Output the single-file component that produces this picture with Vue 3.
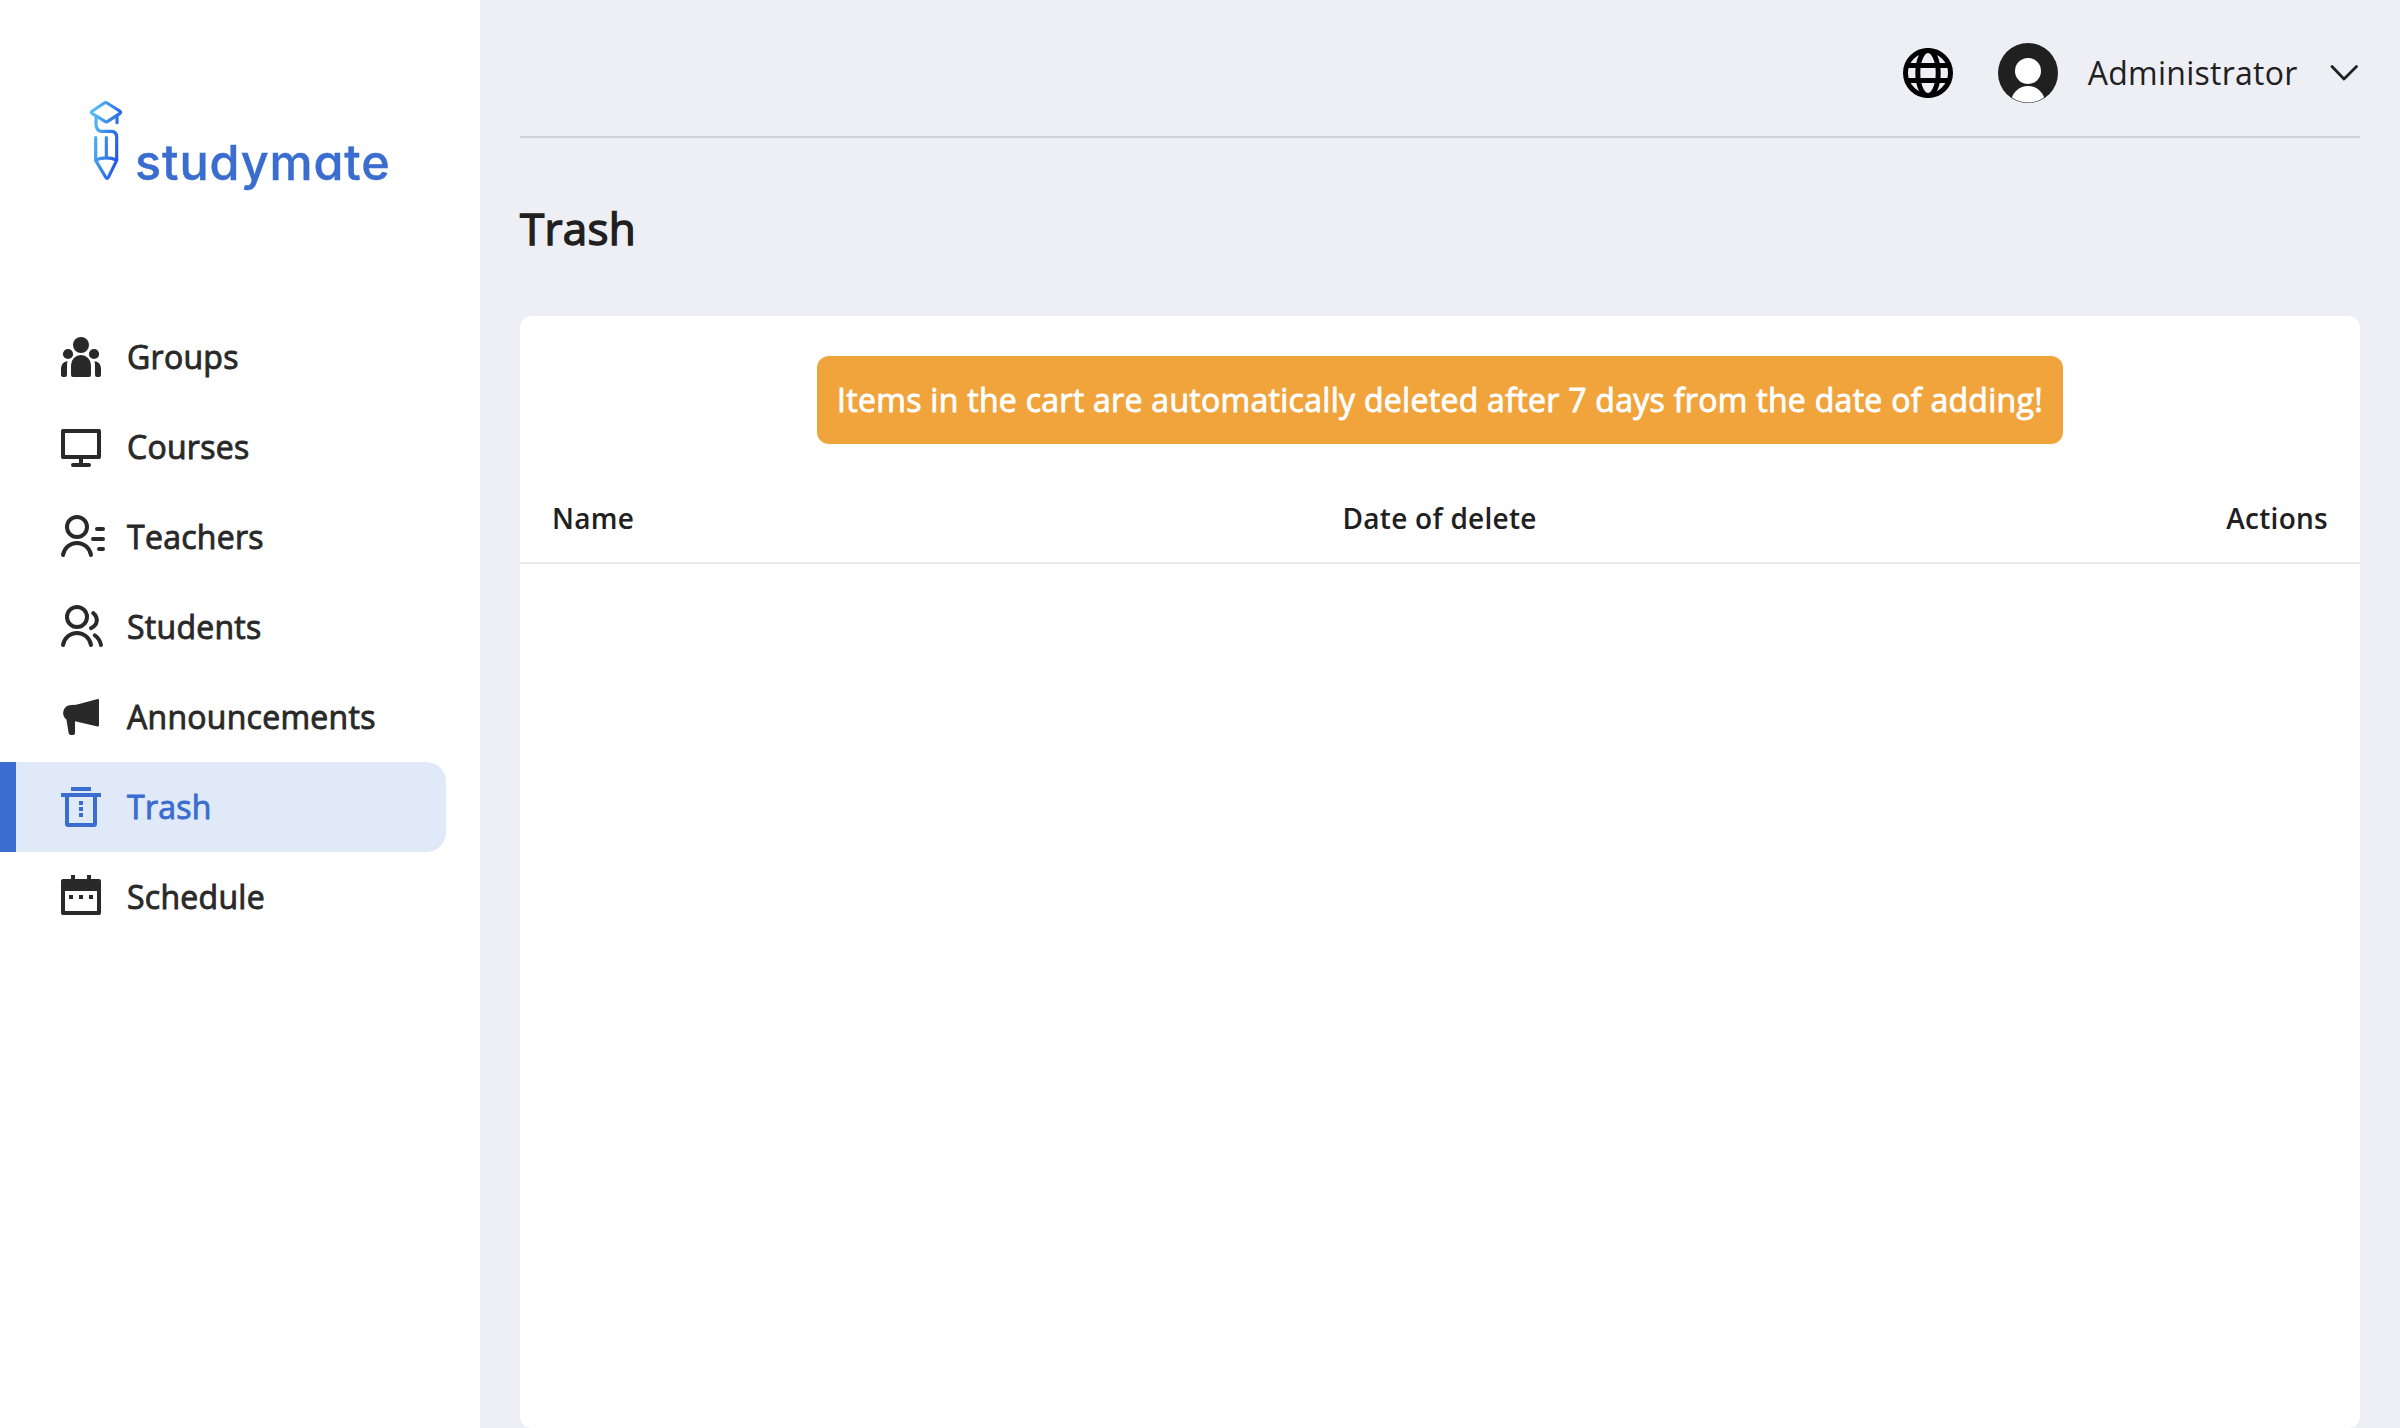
<script setup>
import { ref } from 'vue'

const active = ref('Trash')
const items = ['Groups', 'Courses', 'Teachers', 'Students', 'Announcements', 'Trash', 'Schedule']
const columns = ['Name', 'Date of delete', 'Actions']
</script>

<template>
  <div class="layout">
    <aside class="sidebar">
      <div class="logo">
        <svg class="logo-mark" viewBox="24 27 108 246" width="36" height="82" fill="none" stroke="url(#markGradient)" stroke-width="9.500" stroke-linecap="round" stroke-linejoin="round">
          <defs>
            <linearGradient id="markGradient" gradientUnits="userSpaceOnUse" x1="32" y1="140" x2="122" y2="156">
              <stop offset="0" stop-color="#52bbf7" />
              <stop offset="1" stop-color="#2457e4" />
            </linearGradient>
          </defs>
          <path d="M37 63 73 39Q77 36.500 81 39L119 63Q125 67 119 71L83 94Q79 97 75 94L37 71Q31 67 37 63Z" />
          <path d="M111 76V98" />
          <path d="M48 80V105Q50 123 64 124H94Q110 125 110 141V211L85 262Q81 269 77 262L47 211V143" />
          <path d="M79 143V203M47 210Q79 197 110 210" />
        </svg>
        <span class="logo-text">studymate</span>
      </div>

      <nav class="menu">
        <a v-for="item in items" :key="item" class="menu-item" :class="{ active: item === active }" @click="active = item">
          <svg class="menu-icon" viewBox="0 0 24 24" width="48" height="48">
            <g v-if="item === 'Groups'" fill="currentColor">
              <circle cx="12" cy="6" r="4" />
              <circle cx="5.500" cy="10.500" r="2.550" />
              <circle cx="18.500" cy="10.500" r="2.550" />
              <path d="M7 16a5 5 0 0 1 10 0v5a1 1 0 0 1-1 1H8a1 1 0 0 1-1-1z" />
              <path d="M5.300 14.100Q5 15 5 16v5a1 1 0 0 1-1 1H3a1 1 0 0 1-1-1v-3.500a3.500 3.500 0 0 1 3.300-3.400z" />
              <path d="M18.700 14.100Q19 15 19 16v5a1 1 0 0 0 1 1h1a1 1 0 0 0 1-1v-3.500a3.500 3.500 0 0 0-3.300-3.400z" />
            </g>
            <g v-else-if="item === 'Courses'" fill="none" stroke="currentColor" stroke-width="2" stroke-linecap="round" stroke-linejoin="round">
              <path d="M3 4h18v13H3zM12 17v4M8 21h8" />
            </g>
            <g v-else-if="item === 'Teachers'" fill="none" stroke="currentColor" stroke-width="2" stroke-linecap="round">
              <circle cx="10" cy="7" r="5" />
              <path d="M3 21C3.700 17.400 6.500 15 10 15s6.300 2.400 7 6M20 8h3M18 13h5M21 18h2" />
            </g>
            <g v-else-if="item === 'Students'" fill="none" stroke="currentColor" stroke-width="2" stroke-linecap="round">
              <circle cx="10" cy="7" r="5" />
              <path d="M3 21C3.700 17.400 6.500 15 10 15s6.300 2.400 7 6M18.100 5C20.700 7.300 20.600 10.900 17 12.600M18.900 16.200Q21.200 17.600 22 21" />
            </g>
            <path v-else-if="item === 'Announcements'" fill="currentColor" d="M7 6Q9.500 6 12 5.200L20.300 3.050Q21 2.900 21 3.600V16.100Q21 16.800 20.300 16.700L9 14.150V20Q9 21 8 21H6.900Q6 21 5.850 20.100L4.700 13.200A4 4 0 0 1 7 6Z" />
            <g v-else-if="item === 'Trash'" fill="currentColor">
              <path d="M7 2h10v2H7zM2 5h20v2h-2v13.500a1.500 1.500 0 0 1-1.500 1.500h-13A1.500 1.500 0 0 1 4 20.500V7H2zM6 7v13h12V7z" fill-rule="evenodd" />
              <path d="M11 9h2v2h-2zM11 12h2v2h-2zM11 15h2v2h-2z" />
            </g>
            <path v-else fill="currentColor" fill-rule="evenodd" d="M7 1h2v2h6V1h2v2h4a1 1 0 0 1 1 1v16a1 1 0 0 1-1 1H3a1 1 0 0 1-1-1V4a1 1 0 0 1 1-1h4zM4 9v10h16V9zM6 11h2v2H6zM11 11h2v2h-2zM16 11h2v2h-2z" />
          </svg>
          <span class="menu-label">{{ item }}</span>
        </a>
      </nav>
    </aside>

    <main class="content">
      <header class="topbar">
        <svg class="globe" viewBox="0 0 50 50" width="50" height="50" fill="none" stroke="#000" stroke-width="5">
          <circle cx="25" cy="25" r="22.500" />
          <ellipse cx="25" cy="25" rx="10.200" ry="22.500" />
          <path d="M4.500 17.500h41M4.500 32.500h41" />
        </svg>
        <svg class="avatar" viewBox="0 0 60 60" width="60" height="60">
          <defs>
            <clipPath id="avatarClip"><circle cx="30" cy="30" r="29.500" /></clipPath>
          </defs>
          <circle cx="30" cy="30" r="30" fill="#202020" />
          <g clip-path="url(#avatarClip)" fill="#fff">
            <circle cx="30" cy="28" r="13" />
            <ellipse cx="30" cy="60" rx="17" ry="17" />
          </g>
        </svg>
        <span class="user">Administrator</span>
        <svg class="chevron" viewBox="0 0 32 32" width="32" height="32" fill="none" stroke="#202020" stroke-width="2.800" stroke-linecap="round" stroke-linejoin="round">
          <path d="M4 9.500 16 22 28.500 9.500" />
        </svg>
      </header>

      <h1 class="title">Trash</h1>

      <section class="card">
        <p class="notice">Items in the cart are automatically deleted after 7 days from the date of adding!</p>
        <div class="table-head">
          <span v-for="column in columns" :key="column">{{ column }}</span>
        </div>
      </section>
    </main>
  </div>
</template>

<style>
body {
  margin: 0;
}
</style>

<style scoped>
.layout {
  display: flex;
  height: 1428px;
  overflow: hidden;
  background: #eeeff4;
  color: #202020;
  font-family: "Open Sans", "Noto Sans", sans-serif;
}
.sidebar {
  width: 480px;
  flex: none;
  background: #fff;
}
.logo {
  display: flex;
  align-items: flex-start;
  height: 213px;
  padding: 99px 0 0 88px;
}
.logo-mark {
  flex: none;
}
.logo-text {
  margin: 33px 0 0 11px;
  font: 500 48.500px/62px Inter, sans-serif;
  font-feature-settings: "cv11";
  letter-spacing: 0.900px;
  color: #3a6dcf;
  -webkit-text-stroke: 0.400px currentColor;
}
.menu-item {
  box-sizing: border-box;
  display: flex;
  align-items: center;
  gap: 22px;
  width: 446px;
  height: 90px;
  padding-left: 57px;
  border-radius: 0 20px 20px 0;
  color: #292929;
  font-size: 32px;
  letter-spacing: 0.270px;
  -webkit-text-stroke: 0.900px currentColor;
}
.menu-label {
  padding-bottom: 1px;
}
.menu-item.active {
  padding-left: 41px;
  border-left: 16px solid #3a6dcf;
  background: #e0e9f8;
  color: #3a6dcf;
}
.content {
  display: flex;
  flex: 1;
  flex-direction: column;
  padding: 0 40px;
}
.topbar {
  box-sizing: border-box;
  display: flex;
  align-items: center;
  justify-content: flex-end;
  height: 138px;
  padding-top: 10px;
  border-bottom: 2px solid #d1d2d7;
}
.globe {
  margin-right: 45px;
}
.avatar {
  margin-right: 29.500px;
}
.user {
  font-size: 32px;
  line-height: 44px;
  letter-spacing: 0.250px;
}
.chevron {
  margin-left: 30.500px;
}
.title {
  margin: 60px 0 58px;
  font-size: 44px;
  font-weight: 400;
  line-height: 60px;
  letter-spacing: 0.300px;
  -webkit-text-stroke: 1.400px currentColor;
}
.card {
  display: flex;
  flex-direction: column;
  align-items: center;
  height: 1112px;
  border-radius: 12px;
  background: #fff;
}
.notice {
  box-sizing: border-box;
  height: 88px;
  margin: 40px 0 0;
  padding: 22px 20px;
  border-radius: 12px;
  background: #f1a33c;
  color: #fff;
  font-size: 32px;
  line-height: 44px;
  letter-spacing: 0.290px;
  white-space: nowrap;
  -webkit-text-stroke: 0.900px currentColor;
}
.table-head {
  box-sizing: border-box;
  display: grid;
  grid-template-columns: 790.500px 1fr auto;
  align-items: center;
  align-self: stretch;
  height: 120px;
  padding: 30px 32px 0;
  border-bottom: 2px solid #e9e9e9;
  font-size: 28px;
  font-weight: 600;
  letter-spacing: 0.270px;
}
</style>
